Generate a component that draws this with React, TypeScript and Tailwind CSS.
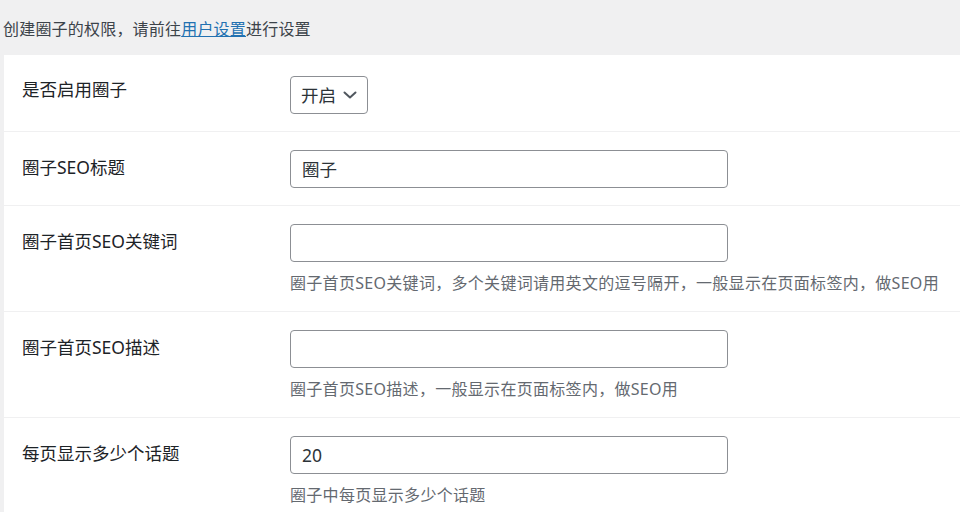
import React from 'react'

const font = { fontFamily: '"Noto Sans", "Noto Sans CJK SC", sans-serif' }

interface RowProps {
  label: string
  children: React.ReactNode
  desc?: string
  first?: boolean
}

function Row({ label, children, desc, first }: RowProps) {
  return (
    <div className={`flex border-b border-[#f0f0f1] pb-[17px] ${first ? 'pt-[21px]' : 'pt-[18px]'}`}>
      <div className={`w-[286px] shrink-0 pl-[18px] text-[17.5px] leading-[24px] text-[#1d2327] ${first ? 'pt-[1px]' : 'pt-[5px]'}`}>
        {label}
      </div>
      <div className="flex flex-col">
        {children}
        {desc && (
          <p className="mt-[10px] whitespace-nowrap text-[16px] leading-[22px] tracking-[0.3px] text-[#646970]">{desc}</p>
        )}
      </div>
    </div>
  )
}

function TextInput({ value }: { value?: string }) {
  return (
    <div className="flex h-[38px] w-[438px] items-center rounded-[4px] border border-[#8c8f94] bg-white px-[11px] text-[17.5px] text-[#2c3338]">
      {value}
    </div>
  )
}

export default function App() {
  return (
    <div className="min-h-[512px] w-[960px] overflow-hidden bg-[#f0f0f1] pl-[4px]" style={font}>
      <p className="-ml-[1px] pt-[18px] pb-[15px] text-[16px] leading-[22px] tracking-[0.2px] text-[#3c434a]">
        创建圈子的权限，请前往<a className="text-[#2271b1] underline" href="#">用户设置</a>进行设置
      </p>
      <div className="bg-white">
        <Row label="是否启用圈子" first>
          <div className="flex h-[38px] w-[78px] items-center justify-between rounded-[4px] border border-[#8c8f94] bg-white pl-[10px] pr-[10px] text-[17.5px] text-[#2c3338]">
            <span>开启</span>
            <svg width="14" height="8" viewBox="0 0 14 8" fill="none">
              <path d="M1.5 1.5 L7 6.5 L12.5 1.5" stroke="#50575e" strokeWidth="2" strokeLinecap="round" strokeLinejoin="round" />
            </svg>
          </div>
        </Row>
        <Row label="圈子SEO标题">
          <TextInput value="圈子" />
        </Row>
        <Row label="圈子首页SEO关键词" desc="圈子首页SEO关键词，多个关键词请用英文的逗号隔开，一般显示在页面标签内，做SEO用">
          <TextInput />
        </Row>
        <Row label="圈子首页SEO描述" desc="圈子首页SEO描述，一般显示在页面标签内，做SEO用">
          <TextInput />
        </Row>
        <Row label="每页显示多少个话题" desc="圈子中每页显示多少个话题">
          <TextInput value="20" />
        </Row>
      </div>
    </div>
  )
}
